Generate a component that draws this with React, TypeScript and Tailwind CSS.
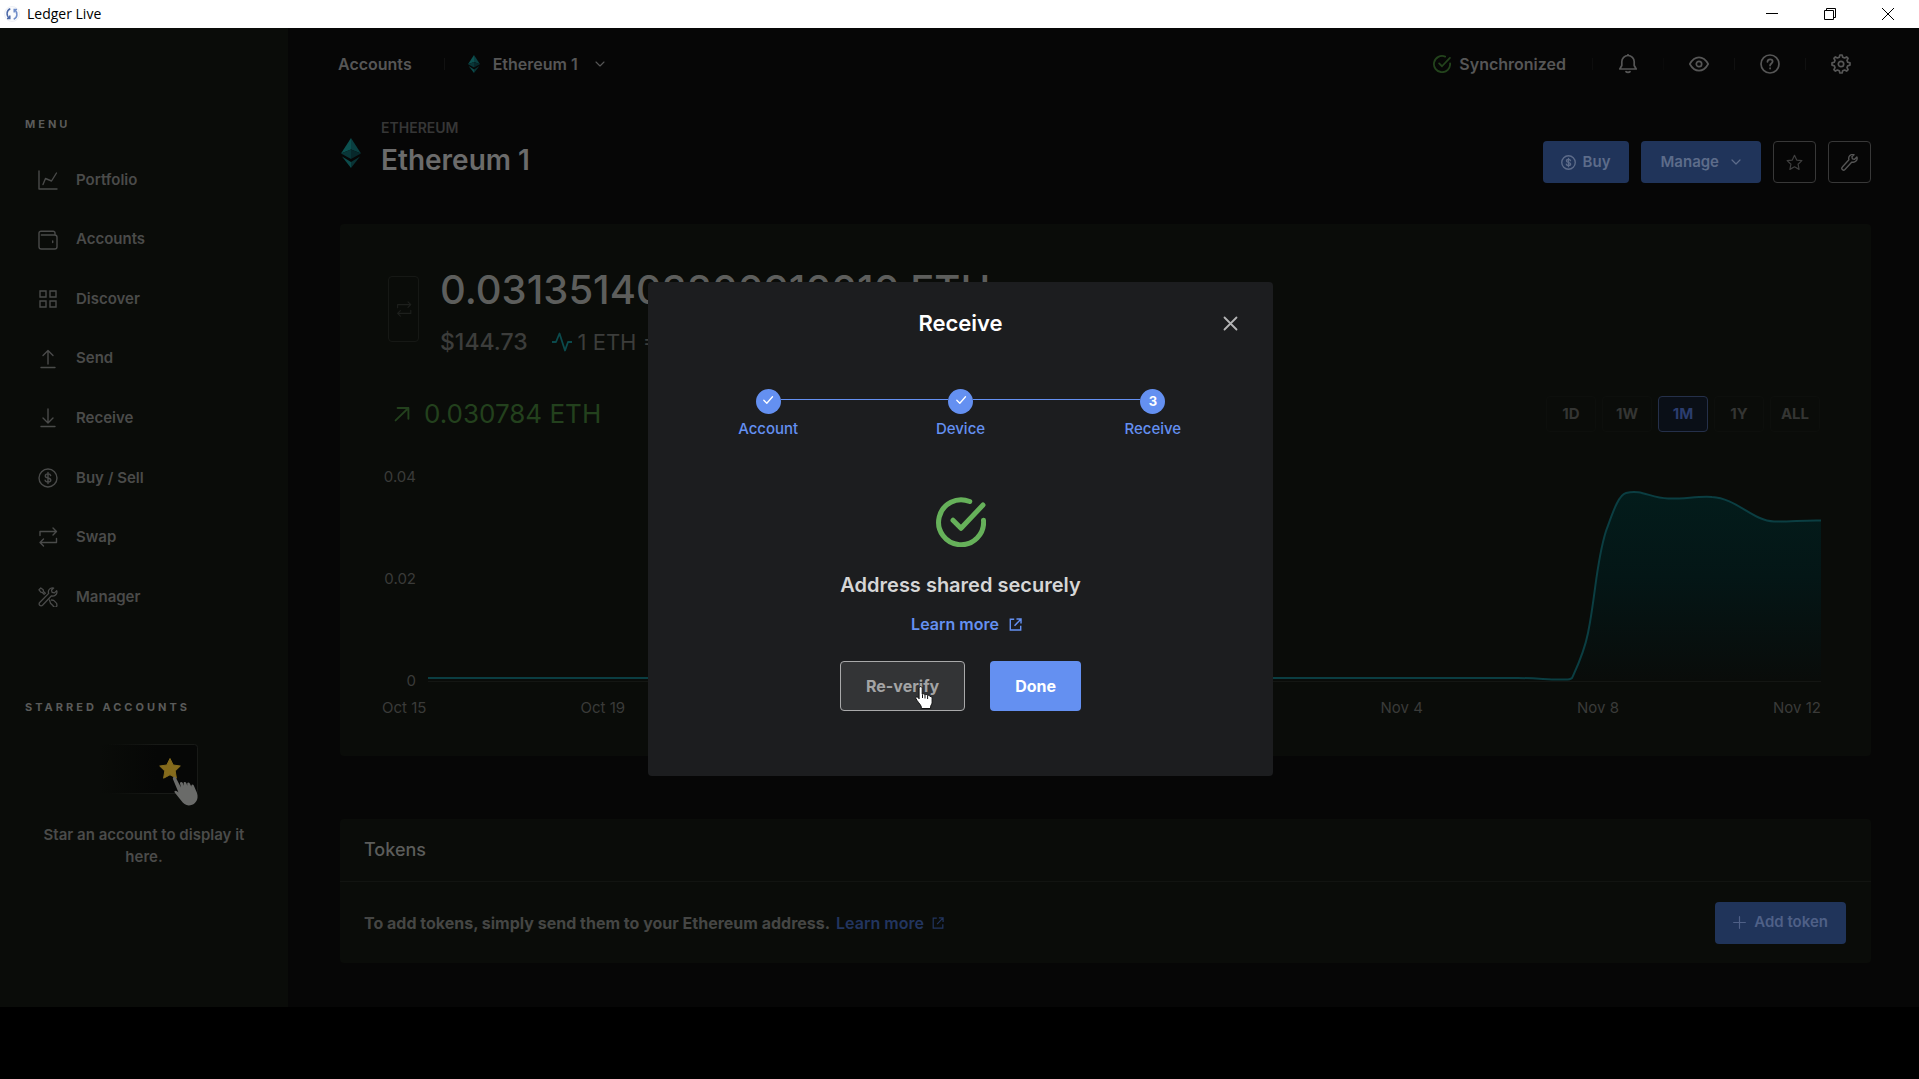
import type { ReactNode, SVGProps } from "react";

type IconProps = SVGProps<SVGSVGElement>;

function Icon({ children, ...props }: IconProps & { children: ReactNode }) {
  return (
    <svg
      viewBox="0 0 20 20"
      fill="none"
      stroke="currentColor"
      strokeWidth="1.4"
      strokeLinecap="round"
      strokeLinejoin="round"
      aria-hidden="true"
      {...props}
    >
      {children}
    </svg>
  );
}

const PortfolioIcon = (p: IconProps) => (
  <Icon {...p}><path d="M1 1v18h18M5 14.5l2.5-6 6 2.5L18.500 3" /></Icon>
);
const WalletIcon = (p: IconProps) => (
  <Icon {...p}>
    <path d="M17 5V3a1.800 1.800 0 0 0-1.800-1.800H3A2 2 0 0 0 1 3.200v13.500A2.300 2.300 0 0 0 3.300 19h13.400a2.300 2.300 0 0 0 2.300-2.300V7.300A2.300 2.300 0 0 0 16.700 5H3.300M14.700 11v1.600" />
  </Icon>
);
const GridIcon = (p: IconProps) => (
  <Icon {...p} strokeLinejoin="miter">
    <path d="M2 2h6v6H2zM12 2h6v6h-6zM2 12h6v6H2zM12 12h6v6h-6z" />
  </Icon>
);
const SendIcon = (p: IconProps) => (
  <Icon {...p}><path d="M10 15V1.500M5 6.500l5-5 5 5M3 18.500h14" /></Icon>
);
const ReceiveIcon = (p: IconProps) => (
  <Icon {...p}><path d="M10 1v14M5 10l5 5 5-5M3 18.500h14" /></Icon>
);
const CoinIcon = (p: IconProps) => (
  <Icon {...p}>
    <circle cx="10" cy="10" r="9" />
    <path d="M12.700 7.600c-.2-1-1.100-1.700-2.700-1.700-1.700 0-2.700.8-2.700 2 0 2.800 5.500 1.300 5.500 4.200 0 1.200-1.100 2-2.800 2s-2.700-.8-2.900-1.900M10 4.500v11" />
  </Icon>
);
const SwapIcon = (p: IconProps) => (
  <Icon {...p}>
    <path d="M2 8.500V4.500h16M15 1l3.500 3.500L15 8M18.500 11.500v4H2.500M5.500 12L2 15.500 5.500 19" />
  </Icon>
);
const ToolsIcon = (p: IconProps) => (
  <Icon {...p} strokeWidth="1.300">
    <path d="M13.500 8.800l1 .2a4 4 0 0 0 4.200-5.300l-2.300 2.200-2.300-.6-.6-2.200 2.200-2a4 4 0 0 0-5 5.300L1.700 15.500a1.900 1.900 0 0 0 2.800 2.800z" />
    <path d="M7.300 6.200L5.500 4.400 5.200 2.800 2.800 1 1 2.800l1.800 2.400 1.600.3 1.800 1.800M11.500 13l1 3.200 2.600 2.600a1.900 1.900 0 0 0 3.700-1.100 2 2 0 0 0-.6-1.800l-2.500-2.500-2.200-.4" />
  </Icon>
);
const WrenchIcon = (p: IconProps) => (
  <Icon {...p}>
    <path d="M12.800 9.500a4.700 4.700 0 0 0 5.900-6L16 6.200l-2.600-.5-.6-2.600 2.500-2.300a4.700 4.700 0 0 0-6 5.900L1.600 15.300a2.100 2.100 0 0 0 3 3z" />
  </Icon>
);
const CheckCircleIcon = (p: IconProps) => (
  <Icon {...p}>
    <path d="M13.500 1.800A9 9 0 1 0 19 9.300M6.800 9.300l3.200 3.200 8.800-9.300" />
  </Icon>
);
const ChevronIcon = (p: IconProps) => (
  <Icon {...p}><path d="M2 6l8 8 8-8" /></Icon>
);
const CheckIcon = (p: IconProps) => (
  <Icon {...p}><path d="M3 10.500l5 5L17.500 4.500" /></Icon>
);
const CloseIcon = (p: IconProps) => (
  <Icon {...p}><path d="M2 2l16 16M18 2L2 18" /></Icon>
);
const PlusIcon = (p: IconProps) => (
  <Icon {...p}><path d="M10 1v18M1 10h18" /></Icon>
);
const ExternalIcon = (p: IconProps) => (
  <Icon {...p} strokeLinecap="butt" strokeLinejoin="miter">
    <path d="M8 2H2v16.500h16V12M11.500 1.500H18.500V8.500M18.500 1.500L8.500 12" />
  </Icon>
);
const BellIcon = (p: IconProps) => (
  <Icon {...p}>
    <path d="M1.800 15h16.400l-2-3.500V7.700a6.200 6.200 0 0 0-12.400 0v3.800zM10 1.500V.3M8 17.600c.8 1 3.200 1 4 0" />
  </Icon>
);
const EyeIcon = (p: IconProps) => (
  <Icon {...p}>
    <path d="M.8 10C3 6 6.200 3.300 10 3.300S17 6 19.200 10C17 14 13.800 16.700 10 16.700S3 14 .8 10z" />
    <circle cx="10" cy="10" r="2.700" />
  </Icon>
);
const HelpIcon = (p: IconProps) => (
  <Icon {...p}>
    <circle cx="10" cy="10" r="9" />
    <path d="M7.500 7.800c.1-1.500 1.100-2.400 2.600-2.400 1.400 0 2.500.9 2.500 2.200 0 1.900-2.500 1.900-2.500 4M10.100 14.200v.3" strokeWidth="1.800" />
  </Icon>
);
const GearIcon = (p: IconProps) => (
  <Icon {...p}>
    <path d="M8.300 3.200L8.900 1h2.200l.6 2.200 1.900.8 2-1.100 1.500 1.500-1.100 2 .8 1.900 2.200.6v2.200l-2.200.6-.8 1.900 1.100 2-1.500 1.500-2-1.100-1.900.8-.6 2.200H8.900l-.6-2.200-1.900-.8-2 1.100-1.500-1.500 1.100-2-.8-1.900L1 11.100V8.900l2.200-.6L4 6.400l-1.100-2 1.500-1.500 2 1.100z" />
    <circle cx="10" cy="10" r="2.700" />
  </Icon>
);
const StarIcon = (p: IconProps) => (
  <Icon {...p}>
    <path d="M10 1.500l2.600 5.600 6.100.7-4.500 4.200 1.200 6.100L10 15l-5.400 3.100L5.800 12 1.300 7.800l6.100-.7z" />
  </Icon>
);
const PulseIcon = (p: IconProps) => (
  <Icon {...p}><path d="M0 10h4l3.500-8.500L13 18.500l3-8.500h4" /></Icon>
);
const ArrowIcon = (p: IconProps) => (
  <Icon {...p}><path d="M2 18L18 2.500M4.500 2.500H18V16" /></Icon>
);

function EthIcon({ className }: { className: string }) {
  return (
    <svg viewBox="0 0 20 30" className={className} aria-hidden="true">
      <path d="M10 0L0 15.500 10 11.500z" fill="#0c5150" />
      <path d="M10 0l10 15.500-10-4z" fill="#0a3f41" />
      <path d="M0 15.500l10-4v9.500z" fill="#093638" />
      <path d="M20 15.500l-10-4v9.500z" fill="#07282b" />
      <path d="M1 18.500l9 5.500v6z" fill="#0c4b4b" />
      <path d="M19 18.500L10 24v6z" fill="#093335" />
    </svg>
  );
}

const menu = [
  { label: "Portfolio", icon: PortfolioIcon },
  { label: "Accounts", icon: WalletIcon },
  { label: "Discover", icon: GridIcon },
  { label: "Send", icon: SendIcon },
  { label: "Receive", icon: ReceiveIcon },
  { label: "Buy / Sell", icon: CoinIcon },
  { label: "Swap", icon: SwapIcon },
  { label: "Manager", icon: ToolsIcon },
];

function TitleBar() {
  return (
    <header className="flex h-7 items-center justify-between bg-white pl-1 pr-[25px] text-black">
      <div className="flex items-center gap-[7px]">
        <svg viewBox="0 0 16 16" className="size-4" fill="none" aria-hidden="true">
          <circle cx="8" cy="8" r="7.500" fill="#fafbfd" stroke="#eef0f5" />
          <path d="M6.300 2.800C2.300 4.500 2 9.500 5.500 12.300M5.800 9.500v3H3" stroke="#4c69a8" strokeWidth="1.500" />
          <path d="M9.700 13.200c4-1.700 4.300-6.700.8-9.500M10.200 6.500v-3H13" stroke="#6f8dc9" strokeWidth="1.500" />
        </svg>
        <span className="font-['Open_Sans',sans-serif] text-sm leading-5">Ledger Live</span>
      </div>
      <div className="flex items-center gap-[46px]">
        <button type="button" aria-label="Minimize">
          <svg viewBox="0 0 12 12" className="size-3" stroke="currentColor"><path d="M0 5.500h12" /></svg>
        </button>
        <button type="button" aria-label="Restore">
          <svg viewBox="0 0 12 12" className="size-3" fill="none" stroke="currentColor">
            <path d="M.5 2.500h9v9h-9zM2.500 2.500v-2h9v9h-2" />
          </svg>
        </button>
        <button type="button" aria-label="Close window">
          <svg viewBox="0 0 12 12" className="size-3" stroke="currentColor"><path d="M0 0l12 12M12 0L0 12" /></svg>
        </button>
      </div>
    </header>
  );
}

function Sidebar() {
  return (
    <aside className="w-72 shrink-0 bg-[#0a0c09] pt-[88px] text-[#4a4b4a]">
      <h2 className="pl-[25px] text-[11px] font-bold leading-4 tracking-[3px] text-[#5a5b5a]">MENU</h2>
      <nav className="mt-7 flex h-[457px] flex-col justify-between">
        {menu.map(({ label, icon: MenuIcon }) => (
          <a key={label} href="#" className="flex h-10 items-center gap-[18px] pl-[38px] text-[15px] font-semibold">
            <MenuIcon className="size-5" />
            {label}
          </a>
        ))}
      </nav>
      <h2 className="mt-[82px] pl-[25px] text-[11px] font-bold leading-4 tracking-[3px] text-[#5a5b5a]">
        STARRED ACCOUNTS
      </h2>
      <svg viewBox="0 0 106 64" className="ml-[97px] mt-7 h-16 w-[106px]" fill="none" aria-hidden="true">
        <defs>
          <linearGradient id="card" x1="0" x2="1">
            <stop offset="0" stopColor="#060705" stopOpacity="0" />
            <stop offset="0.600" stopColor="#060706" />
          </linearGradient>
          <linearGradient id="edge" x1="0" x2="1">
            <stop offset="0.100" stopColor="#181a17" stopOpacity="0" />
            <stop offset="0.600" stopColor="#181a17" />
          </linearGradient>
        </defs>
        <rect x="0.500" y="1.500" width="100" height="49" rx="3" fill="url(#card)" stroke="url(#edge)" />
        <path
          d="M73 15.500l3.200 6.500 7.100 1-5.100 5 1.200 7.200L73 31.800l-6.400 3.400 1.200-7.200-5.100-5 7.100-1z"
          fill="#856b1c"
          stroke="#856b1c"
          strokeLinejoin="round"
        />
        <g transform="translate(2.500 1.500)">
          <path d="M74 32.500c1.200-.7 2 .1 2.500 1l5 9.500-1-4c-.2-1.600 1.800-2.200 2.600-.7l1.400 3-.4-2.600c0-1.500 2.100-1.700 2.700-.3l1 2.800-.1-2.200c.2-1.400 2-1.400 2.600-.1l1.500 3.200.2-1.500c.6-1 1.900-.7 2.300.5l3.300 7.700c1.700 6-1.300 10.200-5 11.500-4.500 1.500-8.200.2-11-4.200l-6.400-8c-.9-1.800.8-2.500 2.300-1.300l1.500 1.300-5.400-13.200c-.4-1-.3-2 .4-2.400z" fill="#6a6b69" />
        </g>
      </svg>
      <p className="mt-[17px] px-8 text-center text-[15px] font-semibold leading-[22px]">
        Star an account to display it here.
      </p>
    </aside>
  );
}

function TopBar() {
  return (
    <div className="flex h-[72px] items-center justify-between pl-[50px] pr-[68px] text-[#565656]">
      <nav className="flex items-center text-base font-semibold">
        <a href="#">Accounts</a>
        <span className="ml-8 h-3 w-px bg-[#111111]" />
        <button type="button" className="ml-[23px] flex items-center gap-[13px]">
          <EthIcon className="h-5 w-3" />
          <span>Ethereum 1</span>
          <ChevronIcon className="ml-1 size-2.5" strokeWidth="2.200" />
        </button>
      </nav>
      <div className="flex items-center">
        <CheckCircleIcon className="size-[18px] text-[#23431c]" strokeWidth="2" />
        <span className="ml-2 text-base font-semibold">Synchronized</span>
        <span className="ml-[26px] mr-[25px] h-3 w-px bg-[#0d0d0d]" />
        <div className="flex items-center gap-[25px]">
          <button type="button" aria-label="Notifications"><BellIcon className="size-5" strokeWidth="1.700" /></button>
          <span className="h-3 w-px bg-[#0a0a0a]" />
          <button type="button" aria-label="Hide amounts"><EyeIcon className="size-5" strokeWidth="1.700" /></button>
          <span className="h-3 w-px bg-[#101010]" />
          <button type="button" aria-label="Help"><HelpIcon className="size-5" strokeWidth="1.700" /></button>
          <span className="h-3 w-px bg-[#101010]" />
          <button type="button" aria-label="Settings"><GearIcon className="size-5" strokeWidth="1.700" /></button>
        </div>
      </div>
    </div>
  );
}

function AccountHeader() {
  return (
    <div className="flex items-end justify-between pt-[18px]">
      <div className="flex items-center gap-5">
        <EthIcon className="ml-px mt-1 h-[30px] w-5" />
        <div className="pb-[5px]">
          <p className="text-sm font-semibold leading-5 text-[#363636]">ETHEREUM</p>
          <h1 className="mt-1 text-[28px] font-semibold leading-9 text-[#6b6b6b]">Ethereum 1</h1>
        </div>
      </div>
      <div className="flex gap-3 text-[15px] font-semibold text-[#5d6c8a]">
        <button type="button" className="flex h-[42px] items-center gap-[7px] rounded-[4px] bg-[#20345a] px-[18px]">
          <CoinIcon className="size-[15px]" strokeWidth="1.800" />
          Buy
        </button>
        <button type="button" className="flex h-[42px] items-center gap-3 rounded-[4px] bg-[#20345a] px-5">
          Manage
          <ChevronIcon className="size-2.5" strokeWidth="2.400" />
        </button>
        <button type="button" aria-label="Star account" className="flex h-[42px] w-[43px] items-center justify-center rounded-[4px] border border-[#383838] text-[#3f3f3f]">
          <StarIcon className="size-[17px]" />
        </button>
        <button type="button" aria-label="Account settings" className="flex h-[42px] w-[43px] items-center justify-center rounded-[4px] border border-[#383838] text-[#555555]">
          <WrenchIcon className="size-[17px]" strokeWidth="1.600" />
        </button>
      </div>
    </div>
  );
}

const ranges = ["1D", "1W", "1M", "1Y", "ALL"];
const days = ["Oct 15", "Oct 19", "Oct 23", "Oct 27", "Oct 31", "Nov 4", "Nov 8", "Nov 12"];
const curve =
  "M0 203H1090C1110 203 1122 205 1134 204.500Q1142 205 1144 203C1150 190 1156 178 1160 158C1168 118 1168 88 1178 56C1184 40 1190 20 1198 18C1214 14 1222 23 1240 23.500C1256 24 1270 21 1284 22C1308 23 1325 46 1346 46.500C1362 47 1375 45 1393 45.500";

function ChartCard() {
  return (
    <section className="mt-[41px] rounded-[4px] bg-[#0a0c09] pb-10 pl-[42px] pr-[50px] pt-[42px]">
      <div className="flex items-start gap-[21px] pl-1.5">
        <button type="button" aria-label="Swap currency" className="mt-2.5 flex h-[66px] w-[31px] items-center justify-center rounded-[4px] border border-[#161815] text-[#1d1f1c]">
          <SwapIcon className="size-4" />
        </button>
        <div>
          <p className="text-[40px] font-medium leading-[48px] text-[#5d5e5c]">0.031351403800910010 ETH</p>
          <p className="mt-3 flex items-center text-[22px] leading-8 text-[#3c3d3b]">
            <span className="text-[23px] font-medium">$144.73</span>
            <PulseIcon className="ml-6 mr-1.5 size-5 text-[#0b4a4c]" strokeWidth="1.800" />
            <span>1 ETH = $4,616.46</span>
          </p>
        </div>
      </div>
      <div className="mt-[38px] flex items-center justify-between">
        <p className="flex items-center gap-3.5 pl-3 text-[26px] leading-8 text-[#23411d]">
          <ArrowIcon className="size-4" strokeWidth="2.400" />
          0.030784 ETH
        </p>
        <div className="flex gap-1.5 pr-px text-[15px] font-bold text-[#343533]">
          {ranges.map((r) => (
            <button
              key={r}
              type="button"
              className={
                r === "1M"
                  ? "h-9 w-[50px] rounded-[4px] border border-[#25304a] bg-[#0a0f17] text-[#2b3d6e]"
                  : "h-9 w-[50px] rounded-[4px] border border-[#0d0f0c]"
              }
            >
              {r}
            </button>
          ))}
        </div>
      </div>
      <div className="mt-[37px] flex gap-3 text-[15px] leading-4 text-[#3a3b39]">
        <div className="flex h-[220px] w-[34px] flex-col justify-between text-right">
          <span>0.04</span>
          <span>0.02</span>
          <span>0</span>
        </div>
        <svg viewBox="0 0 1393 220" preserveAspectRatio="none" className="mt-1.5 h-[220px] min-w-0 flex-1" fill="none" aria-hidden="true">
          <defs>
            <linearGradient id="area" x1="0" y1="0" x2="0" y2="1">
              <stop offset="0" stopColor="#031c1b" />
              <stop offset="0.450" stopColor="#041616" />
              <stop offset="1" stopColor="#090c0a" />
            </linearGradient>
          </defs>
          <path d="M0 206.500H1393" stroke="#141613" />
          <path d={curve + "V205H0z"} fill="url(#area)" />
          <path d={curve} stroke="#0b3e42" strokeWidth="2" />
        </svg>
      </div>
      <div className="mt-[5px] flex justify-between text-[15px] leading-4 text-[#3a3b39]">
        {days.map((d) => (
          <span key={d}>{d}</span>
        ))}
      </div>
    </section>
  );
}

function TokensCard() {
  return (
    <section className="mt-[63px] rounded-[4px] bg-[#0a0c09]">
      <h2 className="flex h-[63px] items-center border-b border-[#121411] px-6 text-lg font-medium text-[#5c5d5b]">
        Tokens
      </h2>
      <div className="flex h-[81px] items-center justify-between pl-6 pr-[25px] text-base text-[#454644]">
        <p className="flex items-center gap-1.5 font-bold">
          To add tokens, simply send them to your Ethereum address.
          <a href="#" className="flex items-center gap-2 font-semibold text-[#22355f]">
            Learn more
            <ExternalIcon className="size-3" strokeWidth="2" />
          </a>
        </p>
        <button type="button" className="flex h-[42px] items-center gap-2 rounded-[4px] bg-[#20345a] px-[18px] text-[15px] font-semibold text-[#4f6087]">
          <PlusIcon className="size-[13px]" strokeWidth="1.800" />
          Add token
        </button>
      </div>
    </section>
  );
}

const steps = ["Account", "Device", "Receive"];

function ReceiveModal() {
  return (
    <div role="dialog" aria-modal="true" aria-labelledby="receive-title" className="w-[625px] rounded-[4px] bg-[#1c1d1f] pb-[65px]">
      <div className="relative flex h-[82px] items-center justify-center">
        <h2 id="receive-title" className="text-[22px] font-semibold text-white">Receive</h2>
        <button type="button" aria-label="Close" className="absolute right-[35px] text-[#b4b4b5]">
          <CloseIcon className="size-[15px]" strokeWidth="2.400" />
        </button>
      </div>
      <ol className="mx-6 mt-[25px] grid grid-cols-3 text-[15px] font-medium text-[#6490f1]">
        {steps.map((label, i) => (
          <li key={label} className="flex flex-col items-center">
            <div className="flex w-full items-start">
              <span className={i === 0 ? "mt-2.5 h-px flex-1" : "mt-2.5 h-px flex-1 bg-[#6490f1]"} />
              <span className="flex size-[25px] items-center justify-center rounded-full bg-[#6490f1] text-[13px] font-bold text-white">
                {i < 2 ? <CheckIcon className="mb-1 size-3" strokeWidth="2.200" /> : "3"}
              </span>
              <span className={i === 2 ? "mt-2.5 h-px flex-1" : "mt-2.5 h-px flex-1 bg-[#6490f1]"} />
            </div>
            <span className="mt-[5px] leading-5">{label}</span>
          </li>
        ))}
      </ol>
      <div className="mt-[58px] flex flex-col items-center">
        <CheckCircleIcon className="size-[50px] text-[#66b15a]" strokeWidth="2" />
        <p className="mt-6 text-xl font-semibold leading-7 text-[#d6d6d6]">Address shared securely</p>
        <a href="#" className="ml-3 mt-[13px] flex items-center gap-2.5 text-base font-semibold leading-6 text-[#6490f1]">
          Learn more
          <ExternalIcon className="size-[13px]" strokeWidth="2.200" />
        </a>
        <div className="mt-[25px] flex gap-[25px] text-base font-bold">
          <button type="button" className="relative h-[50px] rounded-[4px] border border-[#a9a9aa] bg-[#333436] px-[25px] text-[#a4a4a5]">
            Re-verify
            <svg viewBox="0 0 18 24" className="absolute left-[74px] top-6 h-6 w-[18px]" aria-hidden="true">
              <path
                d="M5 .7c1.200-.3 2.200.4 2.200 1.500v6c.8-.7 2.300-.5 2.700.6.700-.6 2.200-.4 2.600.7.9-.5 2.300-.1 2.600 1 1.300-.3 2 .6 2 1.800v4c0 1.900-1.500 3-1.500 4.500v1.700H6.300v-1.700c0-1.500-5-6.500-5.500-8.500-.3-1.200 1.200-1.800 2.100-1l1.200 1.500V2.200c0-.8.300-1.300.9-1.500z"
                fill="#fff"
                stroke="#111"
              />
              <path d="M7.500 8.500v3.500M10 9v3.500M12.600 10v3" stroke="#111" />
            </svg>
          </button>
          <button type="button" className="h-[50px] rounded-[4px] bg-[#6490f1] px-[25px] text-white">Done</button>
        </div>
      </div>
    </div>
  );
}

export default function App() {
  return (
    <div className="min-h-screen bg-black pb-[72px] font-['Inter',sans-serif]">
      <TitleBar />
      <div className="relative flex bg-[#060606]">
        <Sidebar />
        <main className="min-w-0 flex-1">
          <TopBar />
          <div className="pb-11 pl-[52px] pr-12">
            <AccountHeader />
            <ChartCard />
            <TokensCard />
          </div>
        </main>
        <div className="absolute inset-0 flex items-start justify-center pl-0.5 pt-[254px]">
          <ReceiveModal />
        </div>
      </div>
    </div>
  );
}
